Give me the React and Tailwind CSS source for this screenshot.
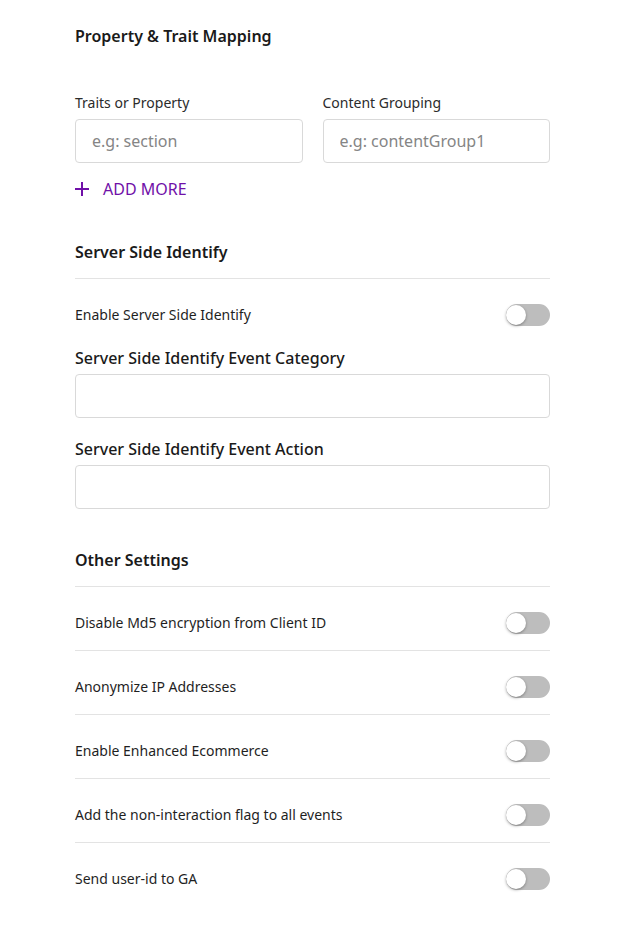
import React from "react";

function Toggle() {
  return (
    <div className="relative h-[22px] w-[44px] shrink-0 rounded-full bg-[#bdbdbd]">
      <div className="absolute left-0 top-[1px] h-[20px] w-[20px] rounded-full bg-white shadow-[0_1px_3px_rgba(0,0,0,0.35)]" />
    </div>
  );
}

function ToggleRow({ label, border = true }) {
  return (
    <div className={`flex items-center justify-between pt-[25px] pb-[16px] ${border ? "border-b border-[#e3e3e3]" : ""}`}>
      <span className="text-[14px] leading-[22px] text-[#1f1f1f]">{label}</span>
      <Toggle />
    </div>
  );
}

function SectionTitle({ children }) {
  return (
    <div className="border-b border-[#e3e3e3] pb-[14px] text-[16px] font-semibold leading-[24px] text-[#1a1a1a]">
      {children}
    </div>
  );
}

export default function App() {
  return (
    <div className="min-h-[944px] bg-white pl-[75px] pr-[76px] pt-[24px] pb-[40px] font-['Noto_Sans',sans-serif] text-[#1a1a1a]">
      <div className="text-[16px] font-semibold leading-[24px]">Property &amp; Trait Mapping</div>

      <div className="mt-[45px] grid grid-cols-2 gap-x-[20px]">
        <div className="flex flex-col">
          <label className="text-[14px] leading-[20px] text-[#2b2b2b]">Traits or Property</label>
          <input
            placeholder="e.g: section"
            className="mt-[6px] h-[44px] rounded-[4px] border border-[#d9d9d9] px-[16px] text-[16px] text-[#1a1a1a] placeholder:text-[#858585] outline-none"
          />
        </div>
        <div className="flex flex-col">
          <label className="text-[14px] leading-[20px] text-[#2b2b2b]">Content Grouping</label>
          <input
            placeholder="e.g: contentGroup1"
            className="mt-[6px] h-[44px] rounded-[4px] border border-[#d9d9d9] px-[16px] text-[16px] text-[#1a1a1a] placeholder:text-[#858585] outline-none"
          />
        </div>
      </div>

      <button className="mt-[16px] flex items-center gap-[14px] text-[16px] leading-[20px] text-[#7010a8]">
        <svg width="14" height="14" viewBox="0 0 14 14" fill="none">
          <path d="M7 0v14M0 7h14" stroke="currentColor" strokeWidth="2" />
        </svg>
        <span>ADD MORE</span>
      </button>

      <div className="mt-[41px]">
        <SectionTitle>Server Side Identify</SectionTitle>
        <div className="flex items-center justify-between pt-[25px] pb-[20px]">
          <span className="text-[14px] leading-[22px] text-[#1f1f1f]">Enable Server Side Identify</span>
          <Toggle />
        </div>

        <div className="text-[16px] font-medium leading-[24px] text-[#1a1a1a]">Server Side Identify Event Category</div>
        <input className="mt-[4px] h-[44px] w-full rounded-[4px] border border-[#d9d9d9] px-[16px] outline-none" />

        <div className="mt-[19px] text-[16px] font-medium leading-[24px] text-[#1a1a1a]">Server Side Identify Event Action</div>
        <input className="mt-[4px] h-[44px] w-full rounded-[4px] border border-[#d9d9d9] px-[16px] outline-none" />
      </div>

      <div className="mt-[39px]">
        <SectionTitle>Other Settings</SectionTitle>
        <ToggleRow label="Disable Md5 encryption from Client ID" />
        <ToggleRow label="Anonymize IP Addresses" />
        <ToggleRow label="Enable Enhanced Ecommerce" />
        <ToggleRow label="Add the non-interaction flag to all events" />
        <ToggleRow label="Send user-id to GA" border={false} />
      </div>
    </div>
  );
}
